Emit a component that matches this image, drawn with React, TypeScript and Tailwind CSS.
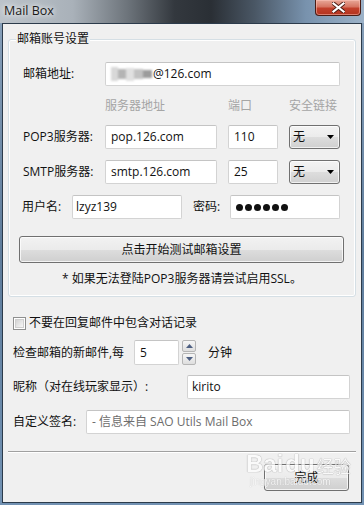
import React from "react";

const box =
  "bg-white border border-[#d3d3d3] border-t-[#c4c4c4] rounded-[2px] flex items-center h-full";

function TextBox({ w, children, className = "" }: { w: string; children?: React.ReactNode; className?: string }) {
  return <div className={`${box} ${w} ${className}`}>{children}</div>;
}

function Select() {
  return (
    <div className="w-[51px] h-full rounded-[3px] border border-[#707070] bg-[linear-gradient(180deg,#f3f3f3_0%,#ebebeb_50%,#dddddd_51%,#d0d0d0_100%)] flex items-center justify-between pl-[3px] pr-[5px] shadow-[inset_0_0_0_1px_rgba(255,255,255,0.7)]">
      <span className="text-[12px]">无</span>
      <svg width="7" height="4" viewBox="0 0 7 4"><path d="M0 0h7L3.5 4z" fill="#000" /></svg>
    </div>
  );
}

function Btn({ w, h, children }: { w: string; h: string; children: React.ReactNode }) {
  return (
    <div className={`${w} ${h} rounded-[3px] border border-[#707070] bg-[linear-gradient(180deg,#f2f2f2_0%,#ebebeb_50%,#dddddd_51%,#cfcfcf_100%)] shadow-[inset_0_0_0_1px_rgba(255,255,255,0.75)] flex items-center justify-center text-[12px] text-[#111]`}>
      {children}
    </div>
  );
}

export default function App() {
  return (
    <div className="w-[364px] h-[505px] relative overflow-hidden flex flex-col bg-[linear-gradient(180deg,#8aa2bb_0%,#5f7d9c_50%,#7292b3_100%)] font-['Open_Sans','Noto_Sans_CJK_SC',sans-serif] text-[12px] text-[#111]">
      {/* Title bar */}
      <div className="h-[23px] flex items-start justify-between bg-[linear-gradient(90deg,#bcc3ca_0%,#a9b1b9_20%,#6d747b_35%,#33383e_48%,#2a2f35_58%,#4a5765_70%,#7892ad_84%,#9cb2c8_100%)]">
        <span className="ml-[4px] mt-[3px] text-[12.5px] leading-[15px] text-[#1a1a1a] [text-shadow:0_0_5px_rgba(255,255,255,0.95),0_0_8px_rgba(255,255,255,0.7)]">
          Mail Box
        </span>
        <div className="mr-[3px] w-[46px] h-[16px] rounded-b-[4px] border border-t-0 border-[#4a1c14] bg-[linear-gradient(180deg,#e8a898_0%,#d67562_45%,#c2402b_55%,#b3331f_100%)] shadow-[inset_0_0_0_1px_rgba(255,200,190,0.5)] flex items-center justify-center">
          <svg width="13" height="11" viewBox="0 0 13 11">
            <path d="M1.5 1.5l10 8M11.5 1.5l-10 8" stroke="#4a1a12" strokeWidth="4" strokeLinecap="square" />
            <path d="M1.5 1.5l10 8M11.5 1.5l-10 8" stroke="#fff" strokeWidth="2.2" strokeLinecap="square" />
          </svg>
        </div>
      </div>

      {/* Client */}
      <div className="mx-[2px] mb-[2px] flex-1 border border-[#2c3b4b] bg-[#f0f0f0] flex flex-col">
        {/* Group box */}
        <div className="mx-[5px] mt-[15px] relative border border-[#d5dfe5] rounded-[3px] shadow-[inset_0_0_0_1px_#ffffff] flex flex-col pb-[9px]">
          <span className="absolute left-[7px] -top-[9px] px-[1px] bg-[#f0f0f0] leading-[16px] text-[12px]">邮箱账号设置</span>

          <div className="mt-[22px] h-[24px] flex items-center pl-[14px]">
            <span className="w-[82px]">邮箱地址:</span>
            <TextBox w="w-[235px]" className="pl-[5px]">
              <span className="flex items-center h-[16px] blur-[1.2px]">
                <span className="w-[7px] h-[14px] bg-[#d8d8d8]" />
                <span className="w-[8px] h-[10px] bg-[#b4b4b4]" />
                <span className="w-[8px] h-[13px] bg-[#e0e0e0]" />
                <span className="w-[9px] h-[10px] bg-[#c2c2c2]" />
                <span className="w-[9px] h-[8px] bg-[#9c9c9c]" />
              </span>
              <span className="ml-[1px]">@126.com</span>
            </TextBox>
          </div>

          <div className="mt-[13px] h-[14px] flex items-center pl-[96px] text-[#a5a5a5]">
            <span className="w-[123px]">服务器地址</span>
            <span className="w-[61px]">端口</span>
            <span>安全链接</span>
          </div>

          <div className="mt-[12px] h-[24px] flex items-center pl-[14px]">
            <span className="w-[82px]">POP3服务器:</span>
            <TextBox w="w-[112px]" className="pl-[5px]">pop.126.com</TextBox>
            <TextBox w="w-[50px]" className="ml-[11px] pl-[5px]">110</TextBox>
            <div className="ml-[11px] h-full"><Select /></div>
          </div>

          <div className="mt-[11px] h-[24px] flex items-center pl-[14px]">
            <span className="w-[82px]">SMTP服务器:</span>
            <TextBox w="w-[112px]" className="pl-[5px]">smtp.126.com</TextBox>
            <TextBox w="w-[50px]" className="ml-[11px] pl-[5px]">25</TextBox>
            <div className="ml-[11px] h-full"><Select /></div>
          </div>

          <div className="mt-[11px] h-[24px] flex items-center pl-[13px]">
            <span className="w-[50px]">用户名:</span>
            <TextBox w="w-[110px]" className="pl-[3px]">lzyz139</TextBox>
            <span className="ml-[11px] w-[37px]">密码:</span>
            <TextBox w="w-[110px]" className="pl-[5px]">
              <span className="flex gap-[2px]">
                {[0, 1, 2, 3, 4, 5].map((i) => (
                  <span key={i} className="w-[7px] h-[7px] rounded-full bg-[#111]" />
                ))}
              </span>
            </TextBox>
          </div>

          <div className="mt-[17px] ml-[10px]">
            <Btn w="w-[325px]" h="h-[27px]">点击开始测试邮箱设置</Btn>
          </div>

          <div className="mt-[8px] h-[16px] flex items-center justify-center">* 如果无法登陆POP3服务器请尝试启用SSL。</div>
        </div>

        {/* Checkbox */}
        <div className="mt-[18px] h-[16px] flex items-center pl-[10px]">
          <span className="w-[13px] h-[13px] border border-[#8e8f8f] bg-white p-[1px]">
            <span className="block w-full h-full border border-[#cfcfcf] bg-[linear-gradient(135deg,#d4d4d4,#f7f7f7)]" />
          </span>
          <span className="ml-[3px]">不要在回复邮件中包含对话记录</span>
        </div>

        {/* Interval */}
        <div className="mt-[9px] h-[25px] flex items-center pl-[10px]">
          <span className="w-[121px]">检查邮箱的新邮件,每</span>
          <TextBox w="w-[45px]" className="pl-[5px]">5</TextBox>
          <div className="ml-[3px] h-full w-[14px] flex flex-col gap-[1px]">
            {["M0 4L3.5 0L7 4z", "M0 0h7L3.5 4z"].map((d, i) => (
              <div key={i} className="h-[12px] border border-[#b5b5b5] rounded-[2px] bg-[linear-gradient(180deg,#f6f6f6,#dedede)] flex items-center justify-center">
                <svg width="7" height="4" viewBox="0 0 7 4"><path d={d} fill="#4d5f82" /></svg>
              </div>
            ))}
          </div>
          <span className="ml-[12px]">分钟</span>
        </div>

        {/* Nickname */}
        <div className="mt-[10px] h-[24px] flex items-center pl-[10px]">
          <span className="w-[174px]">昵称（对在线玩家显示）:</span>
          <TextBox w="w-[163px]" className="pl-[4px] border-[#9dc0e4] border-t-[#7fa9d6]">kirito</TextBox>
        </div>

        {/* Signature */}
        <div className="mt-[11px] h-[24px] flex items-center pl-[10px]">
          <span className="w-[73px]">自定义签名:</span>
          <TextBox w="w-[264px]" className="pl-[5px] text-[#6d6d6d]">- 信息来自 SAO Utils Mail Box</TextBox>
        </div>

        <div className="mt-[17px] mx-[5px] border-t border-[#a0a0a0] border-b border-b-white" />

        <div className="mt-[11px] flex justify-end pr-[12px]">
          <Btn w="w-[85px]" h="h-[27px]">完成</Btn>
        </div>
      </div>

      {/* Watermark */}
      <div className="absolute left-[246px] top-[452px] pointer-events-none opacity-70 flex flex-col">
        <div className="flex items-end leading-none">
          <span className="text-[24px] font-bold text-white [text-shadow:0_0_1px_#8a8a8a,0_0_1px_#8a8a8a] font-['Liberation_Sans',sans-serif]">Bai</span>
          <span className="relative text-[24px] font-bold text-white [text-shadow:0_0_1px_#8a8a8a,0_0_1px_#8a8a8a] font-['Liberation_Sans',sans-serif] ml-[2px]">du</span>
          <span className="ml-[2px] mb-[1px] text-[17px] text-white [text-shadow:0_0_1px_#8a8a8a,0_0_1px_#8a8a8a]">经验</span>
        </div>
        <span className="ml-[4px] text-[10px] leading-[12px] text-white [text-shadow:0_0_1px_#9a9a9a] font-['Liberation_Sans',sans-serif]">jingyan.baidu.com</span>
      </div>
    </div>
  );
}
